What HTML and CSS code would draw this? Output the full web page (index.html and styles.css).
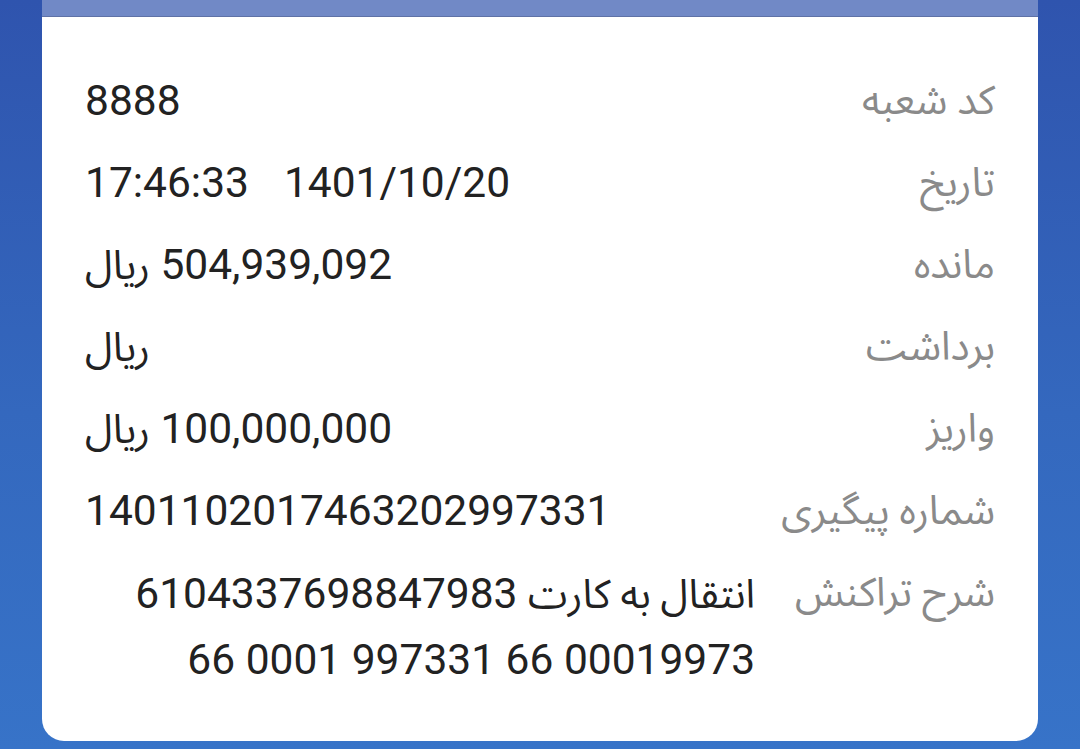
FILE: index.html
```html
<!DOCTYPE html>
<html lang="fa" dir="rtl">
<head>
<meta charset="utf-8">
<title>جزئیات تراکنش</title>
<link rel="stylesheet" href="styles.css">
</head>
<body>
<div class="page">
  <div class="card">
    <div class="card-head"></div>
    <div class="card-body">
      <div class="row">
        <div class="label">کد شعبه</div>
        <div class="value"><span class="val">8888</span></div>
      </div>
      <div class="row">
        <div class="label">تاریخ</div>
        <div class="value"><span class="val datetime"><span>1401/10/20</span><span>17:46:33</span></span></div>
      </div>
      <div class="row">
        <div class="label">مانده</div>
        <div class="value"><span class="val">504,939,092 <span class="fa">ریال</span></span></div>
      </div>
      <div class="row">
        <div class="label">برداشت</div>
        <div class="value"><span class="val"><span class="fa">ریال</span></span></div>
      </div>
      <div class="row">
        <div class="label">واریز</div>
        <div class="value"><span class="val">100,000,000 <span class="fa">ریال</span></span></div>
      </div>
      <div class="row">
        <div class="label">شماره پیگیری</div>
        <div class="value"><span class="val">1401102017463202997331</span></div>
      </div>
      <div class="row row-desc">
        <div class="label">شرح تراکنش</div>
        <div class="value desc"><span class="fa">انتقال به کارت</span> 6104337698847983<br>00019973 66 997331 0001 66</div>
      </div>
    </div>
  </div>
</div>
</body>
</html>
```

FILE: styles.css
```css
html, body {
  margin: 0;
  padding: 0;
}

body {
  width: 1080px;
  height: 749px;
  overflow: hidden;
  background: linear-gradient(180deg, #2f54ae 0%, #3468be 55%, #3773c8 100%);
  font-family: Roboto, "Noto Sans Arabic", "Noto Sans Arabic UI", "DejaVu Sans", sans-serif;
}

.page {
  padding: 0 42px;
}

.card {
  background: #ffffff;
  border-radius: 0 0 22px 22px;
  overflow: hidden;
}

.card-head {
  height: 16px;
  background: #7189c6;
  border-bottom: 1px solid #5f72a6;
}

.card-body {
  padding: 43px 43px 49px 43px;
}

.row {
  display: flex;
  flex-direction: row;
  align-items: flex-start;
  gap: 40px;
  height: 82px;
  line-height: 82px;
  font-size: 40px;
}

.label {
  flex: none;
  color: #8a8a8a;
  white-space: nowrap;
}

.value {
  flex: 1;
  display: flex;
  justify-content: flex-end;
  color: #222222;
  font-size: 42.5px;
  white-space: nowrap;
}

.val {
  direction: rtl;
}

.fa {
  font-size: 40px;
}

.datetime {
  display: flex;
  gap: 35px;
}

.row-desc {
  height: auto;
}

.value.desc {
  display: block;
  text-align: right;
  line-height: 65px;
  padding-top: 9px;
  white-space: normal;
}
```
